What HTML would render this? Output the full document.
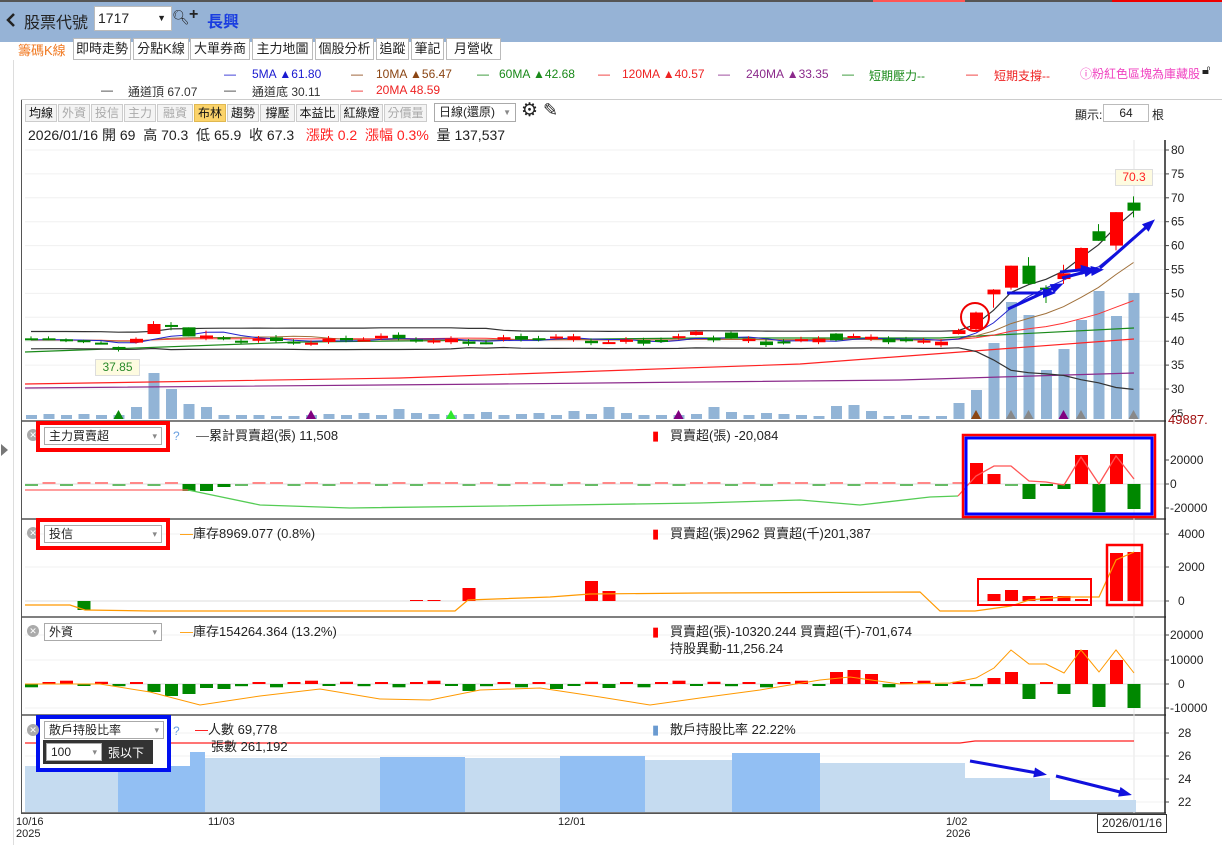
<!DOCTYPE html>
<html><head><meta charset="utf-8">
<style>
*{margin:0;padding:0;box-sizing:border-box}
body{width:1222px;height:845px;overflow:hidden;background:#fff;font-family:"Liberation Sans","Noto Sans CJK TC",sans-serif;font-size:12px;color:#222;position:relative}
.abs{position:absolute;white-space:nowrap}
.tab{position:absolute;top:38px;height:22px;border:1px solid #bbb;background:#fff;font-size:13px;line-height:20px;text-align:center}
.btn{position:absolute;top:104px;height:18px;border:1px solid #ccc;background:#f4f4f4;font-size:12px;line-height:16px;text-align:center;color:#111}
.dis{color:#aaa}
.sel{position:absolute;background:#fff;border:1px solid #aaa;font-size:12px;line-height:16px;padding-left:4px}
.sel:after{content:"▾";position:absolute;right:4px;top:0;color:#888;font-size:9px}
.x{position:absolute;width:12px;height:12px;border-radius:6px;background:#aaa;color:#fff;font-size:9px;line-height:12px;text-align:center}
.lg{position:absolute;white-space:nowrap;font-size:12px;top:67px}
.lg2{position:absolute;white-space:nowrap;font-size:12px;top:83px}
</style></head><body>
<div class="abs" style="left:0;top:0;width:1222px;height:42px;background:#96b3d6"></div>
<div class="abs" style="left:0;top:0;width:1222px;height:2px;background:#555"></div>
<div class="abs" style="left:873px;top:0;width:92px;height:2px;background:#f55"></div>
<div class="abs" style="left:1112px;top:0;width:110px;height:2px;background:#e00"></div>
<svg class="abs" style="left:6px;top:12px" width="10" height="16"><polyline points="8,2 2,8 8,14" fill="none" stroke="#222" stroke-width="2.5"/></svg>
<div class="abs" style="left:24px;top:9px;font-size:16px;color:#222">股票代號</div>
<div class="abs" style="left:94px;top:6px;width:78px;height:25px;background:#fff;border:1px solid #bbb;font-size:14px;line-height:23px;padding-left:3px">1717<span style="position:absolute;right:5px;font-size:9px">▼</span></div>
<div class="abs" style="left:172px;top:9px;font-size:14px">🔍︎</div>
<div class="abs" style="left:189px;top:6px;font-size:16px;font-weight:bold">+</div>
<div class="abs" style="left:207px;top:8px;font-size:16px;color:#1a3de0;font-weight:bold">長興</div>

<div class="abs" style="left:13px;top:60px;width:1px;height:785px;background:#ddd"></div>
<div class="abs" style="left:1px;top:444px;width:0;height:0;border-left:7px solid #777;border-top:6px solid transparent;border-bottom:6px solid transparent"></div>
<div class="abs" style="left:18px;top:40px;font-size:13px;color:#f07820">籌碼K線</div>
<div class="tab" style="left:73px;width:58px">即時走勢</div>
<div class="tab" style="left:133px;width:56px">分點K線</div>
<div class="tab" style="left:190px;width:60px">大單券商</div>
<div class="tab" style="left:252px;width:61px">主力地圖</div>
<div class="tab" style="left:315px;width:59px">個股分析</div>
<div class="tab" style="left:376px;width:33px">追蹤</div>
<div class="tab" style="left:411px;width:33px">筆記</div>
<div class="tab" style="left:446px;width:55px">月營收</div>

<div class="lg" style="left:224px;color:#1a1ad0">—</div><div class="lg" style="left:252px;color:#1a1ad0">5MA ▲61.80</div>
<div class="lg" style="left:351px;color:#8b4513">—</div><div class="lg" style="left:376px;color:#8b4513">10MA ▲56.47</div>
<div class="lg" style="left:477px;color:#1a8a1a">—</div><div class="lg" style="left:499px;color:#1a8a1a">60MA ▲42.68</div>
<div class="lg" style="left:598px;color:#ee2222">—</div><div class="lg" style="left:622px;color:#ee2222">120MA ▲40.57</div>
<div class="lg" style="left:718px;color:#8b2a8b">—</div><div class="lg" style="left:746px;color:#8b2a8b">240MA ▲33.35</div>
<div class="lg" style="left:842px;color:#1a8a1a">—</div><div class="lg" style="left:869px;color:#1a8a1a">短期壓力--</div>
<div class="lg" style="left:966px;color:#ee2222">—</div><div class="lg" style="left:994px;color:#ee2222">短期支撐--</div>
<div class="lg" style="left:1080px;top:65px;color:#f040c0">ⓘ粉紅色區塊為庫藏股</div>
<div class="abs" style="left:1202px;top:62px;font-size:13px">🔓︎</div>
<div class="lg2" style="left:101px;color:#333">—</div><div class="lg2" style="left:128px;color:#333">通道頂 67.07</div>
<div class="lg2" style="left:224px;color:#333">—</div><div class="lg2" style="left:252px;color:#333">通道底 30.11</div>
<div class="lg2" style="left:351px;color:#ee2222">—</div><div class="lg2" style="left:376px;color:#ee2222">20MA 48.59</div>

<div class="abs" style="left:21px;top:99px;width:1145px;height:715px;border:1px solid #555;border-right:none"></div>
<div class="abs" style="left:21px;top:99px;width:1201px;height:1px;background:#ccc"></div>
<div class="btn" style="left:25px;width:32px">均線</div>
<div class="btn dis" style="left:58px;width:32px">外資</div>
<div class="btn dis" style="left:91px;width:32px">投信</div>
<div class="btn dis" style="left:124px;width:32px">主力</div>
<div class="btn dis" style="left:157px;width:36px">融資</div>
<div class="btn" style="left:194px;width:32px;background:#fbd36a;border-color:#e0b850">布林</div>
<div class="btn" style="left:227px;width:32px">趨勢</div>
<div class="btn" style="left:260px;width:35px">撐壓</div>
<div class="btn" style="left:296px;width:43px">本益比</div>
<div class="btn" style="left:340px;width:43px">紅綠燈</div>
<div class="btn dis" style="left:384px;width:43px">分價量</div>
<div class="abs" style="left:434px;top:103px;width:82px;height:19px;border:1px solid #aaa;line-height:17px;padding-left:4px">日線(還原)<span style="position:absolute;right:4px;font-size:8px;color:#888">▼</span></div>
<div class="abs" style="left:521px;top:99px;font-size:19px">⚙︎</div>
<div class="abs" style="left:543px;top:100px;font-size:18px">✎</div>
<div class="abs" style="left:1075px;top:106px;font-size:12px">顯示:</div>
<div class="abs" style="left:1103px;top:104px;width:46px;height:18px;border:1px solid #bbb;text-align:center;line-height:16px">64</div>
<div class="abs" style="left:1152px;top:106px">根</div>
<div class="abs" style="left:28px;top:125px;font-size:14px">2026/01/16 開 69&nbsp;&nbsp;高 70.3&nbsp;&nbsp;低 65.9&nbsp;&nbsp;收 67.3&nbsp;&nbsp;&nbsp;<span style="color:#f22">漲跌 0.2&nbsp;&nbsp;漲幅 0.3%</span>&nbsp;&nbsp;量 137,537</div>

<svg id="sv" class="abs" style="left:0;top:0" width="1222" height="845"></svg>

<div class="x" style="left:27px;top:429px">✕</div>
<div class="sel" style="left:44px;top:427px;width:118px;height:18px">主力買賣超</div>
<div class="abs" style="left:173px;top:429px;color:#6aa0e0">?</div>
<div class="abs" style="left:196px;top:425px;font-size:13px"><span style="color:#555">—</span>累計買賣超(張) 11,508</div>
<div class="abs" style="left:652px;top:425px;font-size:13px"><span style="color:#f00">▮</span>&nbsp;&nbsp;&nbsp;買賣超(張) -20,084</div>
<div class="abs" style="left:36px;top:421px;width:134px;height:31px;border:4px solid #f00"></div>

<div class="x" style="left:27px;top:527px">✕</div>
<div class="sel" style="left:44px;top:525px;width:118px;height:18px">投信</div>
<div class="abs" style="left:180px;top:523px;font-size:13px"><span style="color:#f90">—</span>庫存8969.077 (0.8%)</div>
<div class="abs" style="left:652px;top:523px;font-size:13px"><span style="color:#f00">▮</span>&nbsp;&nbsp;&nbsp;買賣超(張)2962 買賣超(千)201,387</div>
<div class="abs" style="left:36px;top:518px;width:134px;height:32px;border:4px solid #f00"></div>

<div class="x" style="left:27px;top:625px">✕</div>
<div class="sel" style="left:44px;top:623px;width:118px;height:18px">外資</div>
<div class="abs" style="left:180px;top:621px;font-size:13px"><span style="color:#f90">—</span>庫存154264.364 (13.2%)</div>
<div class="abs" style="left:652px;top:621px;font-size:13px"><span style="color:#f00">▮</span>&nbsp;&nbsp;&nbsp;買賣超(張)-10320.244 買賣超(千)-701,674</div>
<div class="abs" style="left:670px;top:638px;font-size:13px">持股異動-11,256.24</div>

<div class="abs" style="left:36px;top:715px;width:135px;height:57px;background:#fff;border:4px solid #0010f0"></div>
<div class="x" style="left:27px;top:724px">✕</div>
<div class="sel" style="left:44px;top:721px;width:120px;height:18px">散戶持股比率</div>
<div class="abs" style="left:43px;top:740px;width:110px;height:24px;background:#333"></div>
<div class="sel" style="left:46px;top:743px;width:56px;height:18px">100</div>
<div class="abs" style="left:108px;top:744px;color:#fff;font-size:12px">張以下</div>
<div class="abs" style="left:173px;top:724px;color:#6aa0e0">?</div>
<div class="abs" style="left:195px;top:719px;font-size:13px"><span style="color:#f00">—</span>人數 69,778</div>
<div class="abs" style="left:211px;top:736px;font-size:13px">張數 261,192</div>
<div class="abs" style="left:652px;top:719px;font-size:13px"><span style="color:#6a9ad0">▮</span>&nbsp;&nbsp;&nbsp;散戶持股比率 22.22%</div>

<div class="abs" style="left:16px;top:816px;font-size:11px;line-height:12px">10/16<br>2025</div>
<div class="abs" style="left:208px;top:816px;font-size:11px">11/03</div>
<div class="abs" style="left:558px;top:816px;font-size:11px">12/01</div>
<div class="abs" style="left:946px;top:816px;font-size:11px;line-height:12px">1/02<br>2026</div>
<div class="abs" style="left:1097px;top:814px;width:70px;height:19px;border:1px solid #333;background:#fff;font-size:12px;line-height:17px;text-align:center">2026/01/16</div>
<div class="abs" style="left:1168px;top:412px;font-size:13px;color:#a01010">49887.</div>
<div class="abs" style="left:95px;top:359px;width:45px;height:17px;background:#fefbe0;border:1px solid #ddd;color:#2a8a2a;font-size:12px;text-align:center;line-height:15px">37.85</div>
<div class="abs" style="left:1115px;top:169px;width:38px;height:17px;background:#fefbe0;border:1px solid #ddd;color:#f22;font-size:12px;text-align:center;line-height:15px">70.3</div>

<script>
var s='';
function X(i){return 31+17.5*i}
function P(p){return 150+(80-p)*4.78}
function R(x,y,w,h,c){s+='<rect x="'+x+'" y="'+y+'" width="'+w+'" height="'+h+'" fill="'+c+'"/>'}
function L(x1,y1,x2,y2,c,w){s+='<line x1="'+x1+'" y1="'+y1+'" x2="'+x2+'" y2="'+y2+'" stroke="'+c+'" stroke-width="'+(w||1)+'"/>'}
function PL(pts,c,w){s+='<polyline fill="none" stroke="'+c+'" stroke-width="'+(w||1)+'" points="'+pts.join(' ')+'"/>'}
function T(x,y,t,c,sz){s+='<text x="'+x+'" y="'+y+'" font-size="'+(sz||12)+'" fill="'+(c||'#222')+'" font-family="Liberation Sans">'+t+'</text>'}
[421,519,617,715,813].forEach(function(y){L(21,y,1166,y,'#555',1.5)});
L(1165,140,1165,813,'#222',1.5);
L(1134,140,1134,813,'#e4e4e4',1);
for(var p=30;p<=80;p+=5){var y=P(p);L(25,y,1164,y,'#f0f0f0');L(1165,y,1169,y,'#444');T(1171,y+4,p,'#222',12)}
T(1171,417,'25','#222',11);
var D=[[40.6,40.6,41,40.2],[40.6,40.5,41,40.2],[40.4,40.0,40.6,39.8],[40.2,39.8,40.3,39.6],[39.7,39.7,40,39.4],[38.8,38.3,38.9,37.85],[39.7,40.5,40.8,39.5],[41.5,43.6,44.2,41.5],[43.4,43.1,44,42.3],[42.9,41,42.9,41],[40.6,41.2,42.2,40.2],[40.8,40.6,41.1,40.2],[40.1,40.1,40.6,39.4]];
for(var i=13;i<53;i++){var b=40.3+0.5*Math.sin(i*0.7)+0.3*Math.sin(i*1.9);var d=((i*37)%7-3)*0.25;var o=b-d/2,c=b+d/2;D.push([o,c,Math.max(o,c)+0.5,Math.min(o,c)-0.4])}
D[40]=[41.8,40.6,42,40.5];D[38]=[41.3,42.0,42.3,41.2];D[46]=[41.6,40.2,41.7,40];
D=D.concat([[41.5,42.3,42.6,41.4],[42.5,46,46.2,42.3],[49.8,50.8,50.9,47],[51.2,55.8,55.8,50.8],[55.8,52,57.6,51.8],[51.2,51,51.7,48],[53,54.2,56,52],[55,59.5,59.6,54.9],[63,61,64.5,61],[60,67,67,59],[69,67.3,70.3,65.9]]);
var Cl=D.map(function(d){return d[1]});
function ma(n){var r=[];for(var i=0;i<64;i++){var t=0;for(var k=0;k<n;k++){var j=i-k;t+=j>=0?Cl[j]:40.2}r.push(t/n)}return r}
var m5=ma(5),m10=ma(10),m20=ma(20);
var up=[],dn=[];for(var i=0;i<64;i++){var t=0;for(var k=0;k<20;k++){var j=i-k;var v=j>=0?Cl[j]:40.2;t+=(v-m20[i])*(v-m20[i])}var sd=Math.sqrt(t/20);sd=Math.max(sd,0.9);up.push(m20[i]+2*sd);dn.push(m20[i]-2*sd)}
var V=[4,5,4,5,4,4,12,46,30,15,12,4,4,4,3,3,4,5,4,6,4,10,6,5,4,5,7,4,5,6,4,8,5,12,6,4,4,4,5,12,7,4,6,5,4,3,13,14,8,3,4,3,3,16,29,76,117,104,49,70,99,128,103,126];
for(var i=0;i<64;i++)R(X(i)-5,419-V[i],11,V[i],'#92b4d6');
var TR={5:'#0a8a0a',16:'#800080',24:'#2ee82e',37:'#800080',54:'#8b4513',56:'#888',57:'#888',59:'#800080',60:'#888',63:'#888'};
for(var k in TR){var x=X(+k);s+='<polygon points="'+(x-5)+',419 '+(x+5)+',419 '+x+',410" fill="'+TR[k]+'"/>'}
function line(arr,c,w){PL(arr.map(function(v,i){return X(i)+','+P(v).toFixed(1)}),c,w)}
PL(['25,384','400,378','800,364','1134,339'],'#f22',1.2);
PL(['25,388','500,384','900,380','1134,373'],'#8b2a8b',1.2);
PL(['25,352','300,342','700,338','940,338','1134,328'],'#1a8a1a',1.2);
line(up,'#333',1.2);line(dn,'#333',1.2);
line(m20,'#f33',1);line(m10,'#a0703a',1);line(m5,'#22c',1);
for(var i=0;i<64;i++){var d=D[i],x=X(i),c=d[1]>=d[0]?'#f00':'#080';if(Math.abs(d[1]-d[0])<0.05)c=(i%2?'#f00':'#080');L(x,P(d[2]),x,P(d[3]),c,1);var y1=P(Math.max(d[0],d[1])),h=Math.max(2,Math.abs(P(d[0])-P(d[1])));R(x-6,y1,13,h,c)}
s+='<circle cx="975" cy="317" r="14" fill="none" stroke="#e00" stroke-width="2"/>';
function arr(pts,c){PL(pts,c,3);var n=pts.length,a=pts[n-2].split(','),b=pts[n-1].split(',');var dx=b[0]-a[0],dy=b[1]-a[1],l=Math.sqrt(dx*dx+dy*dy);dx/=l;dy/=l;var bx=+b[0],by=+b[1];s+='<polygon points="'+(bx+dx*4)+','+(by+dy*4)+' '+(bx-dx*9-dy*5)+','+(by-dy*9+dx*5)+' '+(bx-dx*9+dy*5)+','+(by-dy*9-dx*5)+'" fill="'+c+'"/>'}
arr(['1007,293','1052,293'],'#11d');arr(['1008,309','1060,285'],'#11d');
arr(['1062,278','1093,270'],'#11d');arr(['1091,271','1100,270'],'#11d');
arr(['1060,272','1090,269'],'#11d');arr(['1100,268','1152,222'],'#11d');
var z=484;L(25,z,1164,z,'#ddd');
[[460,'20000'],[484,'0'],[508,'-20000']].forEach(function(a){L(1165,a[0],1169,a[0],'#444');T(1170,a[0]+4,a[1])});
var M=[];for(var i=0;i<64;i++)M.push(((i*13)%5-2)*0.8);
M[9]=-7;M[10]=-7;M[11]=-3;M[53]=1;M[54]=21;M[55]=10;M[56]=-1;M[57]=-15;M[58]=-2;M[59]=-5;M[60]=29;M[61]=-28;M[62]=30;M[63]=-25;
for(var i=0;i<64;i++){var v=M[i],h=Math.max(2,Math.abs(v));var c=v>=0?'#f00':'#080';if(Math.abs(v)<2)c=v>=0?'#f88':'#6b6';R(X(i)-6,v>=0?z-h:z,13,h,c)}
PL(['25,490','188,490'],'#f66',1.3);
PL(['188,490','260,505','350,508','500,506','700,503','800,500','860,505','930,497','958,496'],'#5c5',1.3);
PL(['958,496','976,476','994,466','1011,466','1029,481','1046,482','1064,485','1081,457','1099,484','1116,456','1134,479'],'#f55',1.3);
s+='<rect x="963" y="435" width="192" height="82" fill="none" stroke="#f00" stroke-width="2.5"/>';
s+='<rect x="966" y="438" width="186" height="76" fill="none" stroke="#00f" stroke-width="3"/>';
z=601;L(25,z,1164,z,'#ddd');L(25,567,1164,567,'#f0f0f0');L(25,534,1164,534,'#f0f0f0');
[[534,'4000'],[567,'2000'],[601,'0']].forEach(function(a){L(1165,a[0],1169,a[0],'#444');T(1178,a[0]+4,a[1])});
var Q={3:-9,25:13,32:20,33:10,55:7,56:11,57:5,58:5,59:5,60:2,62:48,63:49,23:1,22:1};
for(var k in Q){var v=Q[k],h=Math.abs(v);R(X(+k)-6,v>=0?z-h:z,13,h,v>=0?'#f00':'#080')}
PL(['25,605','70,605','85,610','150,611','455,611','468,600','550,597','590,594','700,593','920,592','940,611','975,611','1011,606','1029,600','1064,597','1099,597','1116,560','1134,552'],'#f90',1.2);
s+='<rect x="978" y="579" width="113" height="26" fill="none" stroke="#f00" stroke-width="2"/>';
s+='<rect x="1107" y="545" width="35" height="60" fill="none" stroke="#f00" stroke-width="2.5"/>';
z=684;L(25,z,1164,z,'#ddd');L(25,635,1164,635,'#f0f0f0');L(25,660,1164,660,'#f0f0f0');L(25,708,1164,708,'#f0f0f0');
[[635,'20000'],[660,'10000'],[684,'0'],[708,'-10000']].forEach(function(a){L(1165,a[0],1169,a[0],'#444');T(a[1].length>4?1170:1178,a[0]+4,a[1])});
var F=[];for(var i=0;i<64;i++)F.push(((i*17)%7-3)*1.1);
F[7]=-8;F[8]=-12;F[9]=-10;F[10]=-4;F[11]=-5;F[25]=-7;F[30]=-5;F[33]=-4;F[46]=12;F[47]=14;F[48]=10;F[55]=6;F[56]=12;F[57]=-15;F[58]=1;F[59]=-10;F[60]=34;F[61]=-23;F[62]=24;F[63]=-24;
for(var i=0;i<64;i++){var v=F[i],h=Math.max(2,Math.abs(v));R(X(i)-6,v>=0?z-h:z,13,h,v>=0?'#f00':'#080')}
PL(['25,684','100,684','150,692','200,705','260,696','320,689','380,699','430,700','480,690','540,688','600,697','650,705','700,698','760,690','820,680','850,677','900,684','950,683','976,678','994,668','1011,650','1029,664','1046,664','1064,673','1081,650','1099,672','1116,650','1134,673'],'#f90',1);
[[733,'28'],[756,'26'],[779,'24'],[802,'22']].forEach(function(a){L(25,a[0],1164,a[0],'#f0f0f0');L(1165,a[0],1169,a[0],'#444');T(1178,a[0]+4,a[1])});
var S=[[25,118,766,'#c5dbf0'],[118,205,766,'#92bff3'],[190,205,752,'#92bff3'],[205,380,758,'#c5dbf0'],[380,465,757,'#92bff3'],[465,560,758,'#c5dbf0'],[560,645,756,'#92bff3'],[645,732,760,'#c5dbf0'],[732,820,753,'#92bff3'],[820,965,763,'#c5dbf0'],[965,1050,778,'#c5dbf0'],[1050,1136,800,'#c5dbf0']];
S.forEach(function(a){R(a[0],a[2],a[1]-a[0],812-a[2],a[3])});
PL(['25,743','960,743','975,741','1134,741'],'#f22',1.2);
arr(['970,761','1043,774'],'#11d');arr(['1056,776','1128,794'],'#11d');
document.getElementById('sv').innerHTML=s;
</script>
</body></html>
